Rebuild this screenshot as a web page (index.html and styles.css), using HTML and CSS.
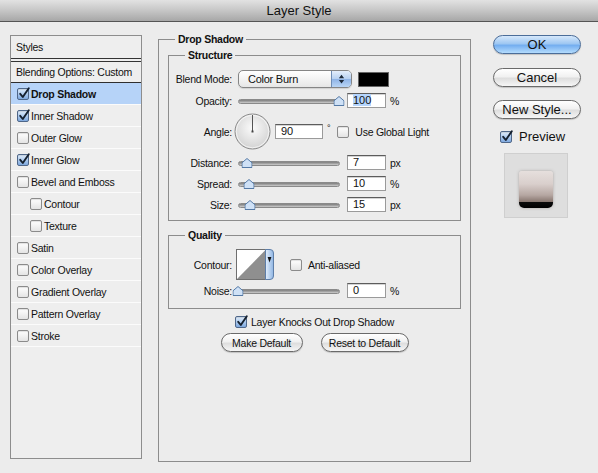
FILE: index.html
```html
<!DOCTYPE html>
<html>
<head>
<meta charset="utf-8">
<title>Layer Style</title>
<link rel="stylesheet" href="styles.css">
</head>
<body>
<div class="titlebar">Layer Style</div>
<div class="content">
  <div class="styles-list">
    <div class="list-head">Styles</div>
    <div class="list-row blending">Blending Options: Custom</div>
    <div class="list-row selected"><span class="cb on"><svg class="tick" viewBox="0 0 14 14" width="14" height="14"><path d="M3.2 7.8 L5.8 11 L11.8 2.2" fill="none" stroke="#15202e" stroke-width="1.9" stroke-linecap="round" stroke-linejoin="round"/></svg></span><b>Drop Shadow</b></div>
    <div class="list-row"><span class="cb on"><svg class="tick" viewBox="0 0 14 14" width="14" height="14"><path d="M3.2 7.8 L5.8 11 L11.8 2.2" fill="none" stroke="#15202e" stroke-width="1.9" stroke-linecap="round" stroke-linejoin="round"/></svg></span>Inner Shadow</div>
    <div class="list-row"><span class="cb"></span>Outer Glow</div>
    <div class="list-row"><span class="cb on"><svg class="tick" viewBox="0 0 14 14" width="14" height="14"><path d="M3.2 7.8 L5.8 11 L11.8 2.2" fill="none" stroke="#15202e" stroke-width="1.9" stroke-linecap="round" stroke-linejoin="round"/></svg></span>Inner Glow</div>
    <div class="list-row"><span class="cb"></span>Bevel and Emboss</div>
    <div class="list-row indent"><span class="cb"></span>Contour</div>
    <div class="list-row indent"><span class="cb"></span>Texture</div>
    <div class="list-row"><span class="cb"></span>Satin</div>
    <div class="list-row"><span class="cb"></span>Color Overlay</div>
    <div class="list-row"><span class="cb"></span>Gradient Overlay</div>
    <div class="list-row"><span class="cb"></span>Pattern Overlay</div>
    <div class="list-row"><span class="cb"></span>Stroke</div>
  </div>

  <fieldset class="group main-group">
    <legend>Drop Shadow</legend>
    <fieldset class="group sub structure">
      <legend>Structure</legend>
      <div class="row row-blend">
        <span class="label">Blend Mode:</span>
        <div class="select">
          <span class="select-text">Color Burn</span>
          <span class="stepper"><svg viewBox="0 0 20 16" width="20" height="16"><path d="M10 3.5 L7.2 7.2 H12.8 Z M7.2 9 H12.8 L10 12.7 Z" fill="#1e2a3a"/></svg></span>
        </div>
        <span class="swatch"></span>
      </div>
      <div class="row row-slider">
        <span class="label">Opacity:</span>
        <div class="slider"><span class="track"></span><svg class="thumb" style="left:97%" viewBox="0 0 11 10" width="11" height="10"><path d="M0.5 4.8 L5.5 0.5 L10.5 4.8 V9.5 H0.5 Z" fill="#cfe1f6" stroke="#557aa6"/></svg></div>
        <span class="field"><span class="sel">100</span></span>
        <span class="unit">%</span>
      </div>
      <div class="row row-angle">
        <span class="label">Angle:</span>
        <svg class="dial" viewBox="0 0 37 37" width="37" height="37">
          <defs><radialGradient id="dg" cx="50%" cy="40%" r="60%"><stop offset="0" stop-color="#fbfbfb"/><stop offset="1" stop-color="#d2d2d2"/></radialGradient></defs>
          <circle cx="18.5" cy="18.5" r="17.5" fill="url(#dg)" stroke="#8a8a8a"/>
          <circle cx="18.5" cy="18.5" r="16.3" fill="none" stroke="#ffffff" stroke-opacity=".7"/>
          <line x1="18.5" y1="18.5" x2="18.5" y2="2" stroke="#555" stroke-width="1"/>
          <rect x="17.5" y="17.5" width="2" height="2" fill="#444"/>
        </svg>
        <span class="field wide">90</span>
        <span class="deg">°</span>
        <span class="cb"></span><span class="cb-label">Use Global Light</span>
      </div>
      <div class="row row-slider">
        <span class="label">Distance:</span>
        <div class="slider"><span class="track"></span><svg class="thumb" style="left:8.7%" viewBox="0 0 11 10" width="11" height="10"><path d="M0.5 4.8 L5.5 0.5 L10.5 4.8 V9.5 H0.5 Z" fill="#cfe1f6" stroke="#557aa6"/></svg></div>
        <span class="field">7</span>
        <span class="unit">px</span>
      </div>
      <div class="row row-slider">
        <span class="label">Spread:</span>
        <div class="slider"><span class="track"></span><svg class="thumb" style="left:10.6%" viewBox="0 0 11 10" width="11" height="10"><path d="M0.5 4.8 L5.5 0.5 L10.5 4.8 V9.5 H0.5 Z" fill="#cfe1f6" stroke="#557aa6"/></svg></div>
        <span class="field">10</span>
        <span class="unit">%</span>
      </div>
      <div class="row row-slider">
        <span class="label">Size:</span>
        <div class="slider"><span class="track"></span><svg class="thumb" style="left:11.5%" viewBox="0 0 11 10" width="11" height="10"><path d="M0.5 4.8 L5.5 0.5 L10.5 4.8 V9.5 H0.5 Z" fill="#cfe1f6" stroke="#557aa6"/></svg></div>
        <span class="field">15</span>
        <span class="unit">px</span>
      </div>
    </fieldset>

    <fieldset class="group sub quality">
      <legend>Quality</legend>
      <div class="row row-contour">
        <span class="label">Contour:</span>
        <svg class="contour" viewBox="0 0 38 31" width="38" height="31">
          <defs><linearGradient id="cg" x1="0" y1="0" x2="1" y2="0"><stop offset="0" stop-color="#e3eefb"/><stop offset="1" stop-color="#8fb5e3"/></linearGradient></defs>
          <rect x="0.5" y="0.5" width="29" height="30" fill="#ffffff" stroke="#6f6f6f"/>
          <path d="M1 30 L29 1.5 V30 Z" fill="#8f8f8f"/>
          <path d="M29.5 0.5 H34 Q37.5 0.5 37.5 4 V27 Q37.5 30.5 34 30.5 H29.5 Z" fill="url(#cg)" stroke="#5e7ea8"/>
          <path d="M31.6 8 H35.4 L33.5 13.5 Z" fill="#111"/>
        </svg>
        <span class="cb aa"></span><span class="cb-label">Anti-aliased</span>
      </div>
      <div class="row row-slider">
        <span class="label">Noise:</span>
        <div class="slider"><span class="track"></span><svg class="thumb" style="left:0%" viewBox="0 0 11 10" width="11" height="10"><path d="M0.5 4.8 L5.5 0.5 L10.5 4.8 V9.5 H0.5 Z" fill="#cfe1f6" stroke="#557aa6"/></svg></div>
        <span class="field">0</span>
        <span class="unit">%</span>
      </div>
    </fieldset>

    <div class="knock">
      <span class="cb on"><svg class="tick" viewBox="0 0 14 14" width="14" height="14"><path d="M3.2 7.8 L5.8 11 L11.8 2.2" fill="none" stroke="#15202e" stroke-width="1.9" stroke-linecap="round" stroke-linejoin="round"/></svg></span><span class="cb-label">Layer Knocks Out Drop Shadow</span>
    </div>
    <div class="defaults">
      <button class="btn small btn-make">Make Default</button>
      <button class="btn small btn-reset">Reset to Default</button>
    </div>
  </fieldset>

  <div class="side">
    <button class="btn big primary">OK</button>
    <button class="btn big">Cancel</button>
    <button class="btn big">New Style...</button>
    <div class="preview-row">
      <span class="cb on"><svg class="tick" viewBox="0 0 14 14" width="14" height="14"><path d="M3.2 7.8 L5.8 11 L11.8 2.2" fill="none" stroke="#15202e" stroke-width="1.9" stroke-linecap="round" stroke-linejoin="round"/></svg></span><span class="preview-label">Preview</span>
    </div>
    <div class="preview-box"><div class="preview-swatch"></div></div>
  </div>
</div>
</body>
</html>
```
FILE: styles.css
```css
* { box-sizing: border-box; }
html, body { margin: 0; padding: 0; }
body {
  width: 598px;
  height: 473px;
  overflow: hidden;
  background: #ececec;
  font-family: "Liberation Sans", Arial, sans-serif;
  font-size: 10.5px;
  letter-spacing: -0.25px;
  color: #111;
}

.titlebar {
  height: 22px;
  line-height: 21px;
  text-align: center;
  font-size: 13px;
  letter-spacing: 0;
  color: #111;
  background: linear-gradient(#e2e2e2, #c6c6c6 50%, #a7a7a7);
  border-bottom: 1px solid #555;
}

.content {
  display: flex;
  align-items: flex-start;
  padding: 13px 0 0 10px;
}

/* left styles list */
.styles-list {
  width: 132px;
  height: 424px;
  flex-shrink: 0;
  border: 1px solid #8d8d8d;
  background: #eeeeee;
}
.list-head {
  height: 26px;
  line-height: 22px;
  padding-left: 5px;
  border-bottom: 4px double #333;
}
.list-row {
  height: 22px;
  display: flex;
  align-items: center;
  padding-left: 6px;
  border-bottom: 1px solid #fbfbfb;
}
.list-row.blending {
  height: 21px;
  padding-left: 5px;
  border-bottom: 1px solid #2e2e2e;
}
.list-row.selected { background: #b6d3f8; }
.list-row.indent { padding-left: 19px; }

/* checkbox */
.cb {
  position: relative;
  display: inline-block;
  flex-shrink: 0;
  width: 12px;
  height: 12px;
  margin-right: 2px;
  border: 1px solid #8b8b8b;
  border-radius: 2px;
  background: linear-gradient(#ffffff, #e4e4e4);
  box-shadow: inset 0 1px 1px rgba(0,0,0,.12);
}
.cb.on {
  border-color: #4f6789;
  background: linear-gradient(#e2eefb, #a9c8ee 55%, #7ea8de);
}
.cb .tick {
  position: absolute;
  left: -1px;
  top: -3px;
}

/* fieldsets */
fieldset.group {
  margin: 0;
  padding: 0;
  min-width: 0;
  border: 1px solid #8c8c8c;
}
fieldset.group > legend {
  padding: 0 3px;
  font-weight: bold;
  line-height: 13px;
}
fieldset.main-group {
  width: 313px;
  height: 429px;
  margin: -2px 0 0 16px;
  padding: 0 9px;
  flex-shrink: 0;
}
fieldset.main-group > legend { margin-left: 7px; }
fieldset.sub > legend { margin-left: 16px; }
fieldset.structure { margin-top: 3px; padding: 6px 0 5px; }
fieldset.quality { margin-top: 8px; padding: 7px 0 7px; }

.row {
  display: flex;
  align-items: center;
  height: 21px;
}
.row-blend { height: 22px; }
.row-angle { height: 41px; }
.row-contour { height: 31px; }
.label {
  width: 63px;
  margin-right: 6px;
  text-align: right;
  flex-shrink: 0;
}

/* select */
.select {
  display: flex;
  align-items: stretch;
  width: 114px;
  height: 18px;
  border: 1px solid #858585;
  border-radius: 5px;
  background: linear-gradient(#ffffff, #f3f3f3 50%, #e6e6e6);
  box-shadow: 0 1px 1px rgba(0,0,0,.12);
  overflow: hidden;
}
.select-text {
  flex: 1;
  padding-left: 9px;
  line-height: 16px;
  font-size: 11px;
}
.stepper {
  width: 20px;
  display: flex;
  align-items: center;
  border-left: 1px solid #6f8db5;
  background: linear-gradient(#e4eefb, #b6d0f1 50%, #8eb3e6 51%, #b9d5f5);
}
.swatch {
  width: 31px;
  height: 15px;
  margin-left: 6px;
  background: #000;
  border: 1px solid #666;
}

/* slider */
.slider {
  position: relative;
  width: 104px;
  height: 12px;
  flex-shrink: 0;
}
.track {
  display: block;
  position: absolute;
  left: 0;
  right: 2px;
  top: 4px;
  height: 5px;
  border-radius: 3px;
  background: linear-gradient(#7e7e7e, #a9a9a9 60%, #cfcfcf);
  border: 1px solid #8a8a8a;
}
.thumb {
  position: absolute;
  top: 1px;
  transform: translateX(-50%);
}

/* fields */
.field {
  width: 39px;
  height: 15px;
  margin-left: 5px;
  padding-left: 5px;
  line-height: 13px;
  font-size: 11px;
  letter-spacing: 0;
  background: #fff;
  border: 1px solid #9a9a9a;
  border-top-color: #5c5c5c;
  box-shadow: inset 0 1px 0 #d4d4d4;
  flex-shrink: 0;
}
.field.wide { width: 48px; margin-left: 4px; }
.sel { background: #b5d5fd; }
.unit { margin-left: 4px; }
.deg { margin-left: 4px; align-self: flex-start; margin-top: 12px; font-size: 9px; }
.row-angle .cb { margin-left: 7px; }
.cb-label { margin-left: 4px; }
.dial { margin-left: -4px; }

/* contour */
.contour { margin-left: -2px; }
.cb.aa { margin-left: 16px; }

/* bottom of main panel */
.knock {
  display: flex;
  align-items: center;
  justify-content: center;
  height: 14px;
  margin-top: 6px;
}
.knock .cb-label { margin-left: 2px; }
.defaults {
  display: flex;
  justify-content: center;
  gap: 18px;
  margin-top: 4px;
}

/* buttons */
.btn {
  height: 19px;
  margin: 0;
  padding: 0 12px;
  font-family: "Liberation Sans", Arial, sans-serif;
  color: #111;
  border: 1px solid #6a6a6a;
  border-radius: 10px;
  background: linear-gradient(#ffffff, #f1f1f1 45%, #dedede 55%, #f6f6f6);
  box-shadow: 0 1px 1px rgba(0,0,0,.18);
  line-height: 16px;
  white-space: nowrap;
}
.btn.small { font-size: 10.5px; letter-spacing: -0.25px; padding: 0; }
.btn-make { width: 82px; }
.btn-reset { width: 88px; letter-spacing: -0.45px; }
.btn.big {
  width: 88px;
  padding: 0;
  font-size: 13px;
  letter-spacing: 0;
}
.btn.primary {
  border-color: #4b6d99;
  background: linear-gradient(#d6e8fb, #9ec7f2 45%, #74aef0 55%, #b4dcfd);
}

.side {
  display: flex;
  flex-direction: column;
  align-items: flex-start;
  margin-left: 22px;
  width: 88px;
  flex-shrink: 0;
}
.side .btn + .btn { margin-top: 13px; }
.side .btn.primary + .btn { margin-top: 14px; }
.preview-row {
  display: flex;
  align-items: center;
  height: 13px;
  margin-top: 11px;
  margin-left: 7px;
}
.preview-label {
  margin-left: 5px;
  font-size: 13px;
  letter-spacing: 0;
}
.preview-box {
  width: 64px;
  height: 65px;
  margin-top: 10px;
  margin-left: 11px;
  padding: 17px 0 0 14px;
  background: #dedede;
  border: 1px solid #cfcfcf;
}
.preview-swatch {
  width: 34px;
  height: 37px;
  border-radius: 3px 3px 5px 5px;
  background: linear-gradient(#e6dfdd, #d9cfcc 35%, #b6a7a2 65%, #85746d 84%, #0a0a0a 85%, #000);
  box-shadow: 0 0 3px rgba(120,110,105,.5);
}
```
